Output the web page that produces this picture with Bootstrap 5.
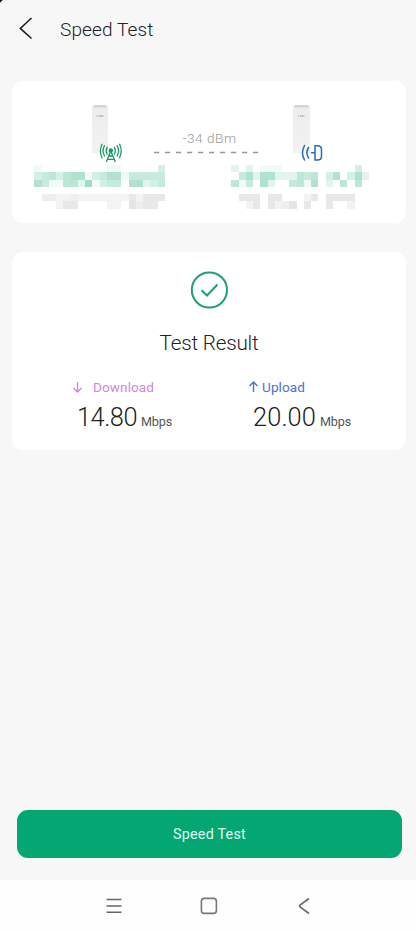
<!DOCTYPE html>
<html lang="en">
<head>
<meta charset="utf-8">
<meta name="viewport" content="width=device-width, initial-scale=1">
<title>Speed Test</title>
<link rel="stylesheet" href="https://cdn.jsdelivr.net/npm/bootstrap@5.3.0/dist/css/bootstrap.min.css">
<style>
body{font-family:Roboto,"Liberation Sans",sans-serif;font-weight:300;background:#f7f7f7;color:#222;height:931px;overflow:hidden}
svg{display:block;flex:none}
.line{white-space:nowrap;line-height:1}
.corner{left:0;top:0}
.top-bar{height:81px;padding:17px 0 0 19px}
.page-title{font-size:19px;margin-left:27px;height:25px;line-height:25px;color:#222}
.panel{border-radius:11px;margin:0 10px 0 12px}
.link-panel{height:142px}
.result-panel{height:198px;margin-top:29px;padding-top:18px}
.signal{font-size:13.6px;color:#999;padding-top:51px;width:110px;margin-left:28px}
.signal-text{margin-left:5px}
.signal-dashes{margin-top:5px}
.device-row{height:83px;padding-left:78px}
.result-title{font-size:20.7px;height:26px;line-height:26px;margin-top:20px;color:#222}
.metrics{margin-top:23px}
.metric-down{width:176px;margin-left:60px}
.metric-label{font-size:13.6px;height:17px;line-height:17px;font-weight:400}
.down{color:#d584e2}.up{color:#4c70d4}
.metric-value{font-size:25.4px;line-height:30px;height:30px;margin-top:6px;padding-left:5px}
.unit{font-size:12.6px;margin-left:4px;font-weight:400;color:#555}
.run-btn{height:48px;margin:0 14px 22px 17px;border:0;border-radius:11px;background:#04a671;color:#e0fff4;font-size:14.3px;font-weight:400;padding:2px 0 0}
.run-btn:hover{background:#04a671;color:#fff}
.system-nav{height:51px;padding-left:105px;background:#fefefe}
</style>
<script src="https://cdn.jsdelivr.net/npm/bootstrap@5.3.0/dist/js/bootstrap.bundle.min.js"></script>
</head>
<body class="d-flex flex-column position-relative">
<svg class="corner position-absolute" width="4" height="4"><path d="M0 0H3Q1 1 0 3Z" fill="#111"/></svg>
<header class="top-bar d-flex align-items-start">
  <svg width="14" height="24" fill="none" stroke="#222" stroke-width="1.6"><path d="M12.5 1 1.3 11.4 12.5 21.5"/></svg>
  <h1 class="page-title line mb-0 fw-light"><span data-w="93.5">Speed Test</span></h1>
</header>
<main class="flex-grow-1 d-flex flex-column">
  <section class="panel link-panel bg-white">
    <div class="device-row d-flex">
      <svg width="34" height="83" viewBox="90 81 34 83" fill="none">
        <defs><linearGradient id="shell" x2="0" y2="1"><stop stop-color="#ededed"/><stop offset="1" stop-color="#f2f2f2"/></linearGradient></defs>
        <path d="M92 108Q92 105 95 105H105Q108 105 108 108V153H92Z" fill="url(#shell)"/><path d="M93 107.5 94 105H106L107 107.5Z" fill="#d5d5d5"/><path d="M96.5 116h1M98.5 116h5" stroke="#bbb" stroke-width="1.6"/>
        <g stroke="#189a68" stroke-width="1.3" stroke-linecap="round"><path d="M110.8 151 106.4 161.5M110.8 151 115.2 161.5M108.6 156H113M107.5 159.3H114.1"/><circle cx="110.8" cy="150.5" r="1.6" fill="#189a68"/><path d="M107.2 147.3Q105.3 150.8 107.2 154.2M114.4 147.3Q116.3 150.8 114.4 154.2M104.5 145.7Q101.5 150.8 104.5 156M117.1 145.7Q120.1 150.8 117.1 156M102 144.3Q98.7 151 102 157.7M119.6 144.3Q122.9 151 119.6 157.7"/></g>
      </svg>
      <div class="signal line d-flex flex-column align-items-center">
        <span class="signal-text" data-w="54">-34 dBm</span>
        <svg class="signal-dashes" width="110" height="3"><path d="M2 1.5H108" stroke="#999" stroke-width="1.7" stroke-dasharray="5.2 5.8"/></svg>
      </div>
      <svg class="ms-4 ps-1" width="38" height="83" viewBox="290 81 34 83" fill="none">
        <path d="M293 108Q293 105 296 105H307Q310 105 310 108V153H293Z" fill="url(#shell)"/><path d="M294 107.5 295 105H308L309 107.5Z" fill="#d5d5d5"/><path d="M298 116h1M300 116h4.5" stroke="#bbb" stroke-width="1.6"/>
        <g stroke="#266db8" stroke-width="1.5" stroke-linecap="round"><path d="M304.5 145.5Q300.5 152.8 304.5 160M308.5 147.5Q305.3 152.8 308.5 158M311.5 152.8H315M315 145.7H317.5Q321.5 145.7 321.5 149.5V156.2Q321.5 160 317.5 160H315Z"/></g>
      </svg>
    </div>
    <svg id="names" width="394" height="50" viewBox="12 164 394 50" shape-rendering="crispEdges" aria-label="Hidden device names"></svg>
  </section>
  <section class="panel result-panel bg-white">
    <svg class="mx-auto" width="40" height="40" fill="none" stroke="#1fa16f" stroke-width="2"><circle cx="20.4" cy="20" r="17.6"/><path d="M12.5 20.2 18 25.5 28.5 14.5"/></svg>
    <h2 class="result-title line text-center mb-0 fw-light"><span data-w="99">Test Result</span></h2>
    <div class="metrics d-flex">
      <div class="metric-down">
        <div class="metric-label down line d-flex"><svg width="11" height="16" fill="none" stroke="currentColor" stroke-width="1.4"><path d="M5.5 3V13M1.5 9 5.5 13 9.5 9"/></svg><span data-w="61" style="margin-left:10px">Download</span></div>
        <div class="metric-value line"><span data-w="60">14.80</span><span class="unit" data-w="31">Mbps</span></div>
      </div>
      <div>
        <div class="metric-label up line d-flex"><svg width="11" height="16" fill="none" stroke="currentColor" stroke-width="1.4"><path d="M5.5 13V3M1.5 7 5.5 3 9.5 7"/></svg><span data-w="43" style="margin-left:3px">Upload</span></div>
        <div class="metric-value line"><span data-w="63">20.00</span><span class="unit" data-w="31">Mbps</span></div>
      </div>
    </div>
  </section>
  <button type="button" class="run-btn btn mt-auto"><span data-w="73">Speed Test</span></button>
</main>
<nav class="system-nav d-flex align-items-center">
  <svg width="18" height="18" fill="none" stroke="#666" stroke-width="1.5"><path d="M1.5 2.5H16.5M1.5 9H16.5M1.5 15.2H16.5"/></svg>
  <svg width="18" height="18" fill="none" stroke="#777" stroke-width="1.6" style="margin-left:77px"><rect x="1.4" y="1.4" width="15" height="15" rx="3"/></svg>
  <svg width="14" height="18" fill="none" stroke="#666" stroke-width="1.6" style="margin-left:80px"><path d="M11 1.5 2.3 7.8Q1 9 2.3 10.2L11 16.5"/></svg>
</nav>
<script>
// Censored name blocks: each digit is a cell's tint, 0 = clear.
const blocks=[
 [34.3,["100000000011000003","345356613466144444","641155271344066234"],["022112111111131333","000133000011042330"]],
 [231.3,["2020111000000000030","0462662225450360362","5140620045160205050"],["0333033000130333300","0013031240300300100"]]
];
const green=["","#f1faf6","#e2f5ed","#d2f0e5","#c6ebdd","#bce7d7","#b1e2cf","#a2dcc4"];
const grey=["","#f3f3f3","#eeeeee","#e8e8e8","#e4e4e4"];
const s=7.25;let out="";
for(const [x,g,n] of blocks){
 [[g,green,165],[n,grey,194]].forEach(([rows,tints,y])=>rows.forEach((r,j)=>[...r].forEach((c,i)=>{
  if(+c) out+=`<rect x="${x+i*s}" y="${y+j*s}" width="${s}" height="${s}" fill="${tints[c]}"/>`;
 })));
}
document.getElementById("names").innerHTML=out;
// Track each label out to its design width.
document.querySelectorAll("[data-w]").forEach(e=>{
 const w=e.getBoundingClientRect().width,n=e.textContent.length;
 const sp=(+e.dataset.w-w)/n;
 e.style.letterSpacing=sp+"px";
});
</script>
</body>
</html>
